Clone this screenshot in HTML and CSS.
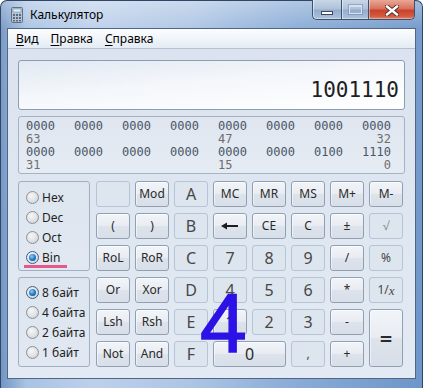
FILE: index.html
```html
<!DOCTYPE html>
<html>
<head>
<meta charset="utf-8">
<title>Калькулятор</title>
<link rel="stylesheet" href="styles.css">
</head>
<body>
<div class="window">
  <div class="titlebar">
    <svg class="appicon" width="12" height="16" viewBox="0 0 12 16">
      <rect x="0.5" y="0.5" width="11" height="15" rx="1" fill="#b7c4d4" stroke="#5f7088"/>
      <rect x="2" y="2" width="8" height="3" fill="#dff3ff" stroke="#6c8aa6" stroke-width="0.6"/>
      <g fill="#5a6b80">
        <rect x="2" y="7" width="2" height="2"/><rect x="5" y="7" width="2" height="2"/><rect x="8" y="7" width="2" height="2"/>
        <rect x="2" y="10" width="2" height="2"/><rect x="5" y="10" width="2" height="2"/><rect x="8" y="10" width="2" height="2"/>
        <rect x="2" y="13" width="2" height="1.5"/><rect x="5" y="13" width="2" height="1.5"/><rect x="8" y="13" width="2" height="1.5"/>
      </g>
    </svg>
    <span class="title">Калькулятор</span>
    <div class="controls">
      <div class="ctl cmin"><span class="minglyph"></span></div>
      <div class="ctl cmax"><span class="maxglyph"></span></div>
      <div class="ctl cclose">
        <svg width="14" height="11" viewBox="0 0 14 11">
          <path d="M2 1.5 L12 9.5 M12 1.5 L2 9.5" stroke="#4a2a24" stroke-width="4.2" stroke-linecap="square"/>
          <path d="M2 1.5 L12 9.5 M12 1.5 L2 9.5" stroke="#ffffff" stroke-width="2.4" stroke-linecap="square"/>
        </svg>
      </div>
    </div>
  </div>
  <div class="client">
    <div class="menubar">
      <span class="mi"><u>В</u>ид</span>
      <span class="mi"><u>П</u>равка</span>
      <span class="mi"><u>С</u>правка</span>
    </div>
    <div class="calc">
      <div class="display">1001110</div>
      <div class="bits">
        <span>0000</span><span>0000</span><span>0000</span><span>0000</span><span>0000</span><span>0000</span><span>0000</span><span>0000</span>
        <span class="lbl">63</span><span></span><span></span><span></span><span class="lbl">47</span><span></span><span></span><span class="lbl rt">32</span>
        <span>0000</span><span>0000</span><span>0000</span><span>0000</span><span>0000</span><span>0000</span><span>0100</span><span>1110</span>
        <span class="lbl">31</span><span></span><span></span><span></span><span class="lbl">15</span><span></span><span></span><span class="lbl rt">0</span>
      </div>
      <div class="keys">
        <div class="group g1">
          <div class="radio"><span class="dot"></span>Hex</div>
          <div class="radio"><span class="dot"></span>Dec</div>
          <div class="radio"><span class="dot"></span>Oct</div>
          <div class="radio"><span class="dot on"></span>Bin</div>
          <span class="pink"></span>
        </div>
        <div class="group g2">
          <div class="radio"><span class="dot on"></span>8 байт</div>
          <div class="radio"><span class="dot"></span>4 байта</div>
          <div class="radio"><span class="dot"></span>2 байта</div>
          <div class="radio"><span class="dot"></span>1 байт</div>
        </div>

        <div class="k f"></div>
        <div class="k r">Mod</div>
        <div class="k f big">A</div>
        <div class="k r">MC</div>
        <div class="k r">MR</div>
        <div class="k r">MS</div>
        <div class="k r">M+</div>
        <div class="k r">M-</div>

        <div class="k r">(</div>
        <div class="k r">)</div>
        <div class="k f big">B</div>
        <div class="k r"><svg width="18" height="8" viewBox="0 0 18 8"><path d="M4 4 H17" stroke="#1d1d1d" stroke-width="2"/><path d="M0 4 L6 0.5 L6 7.5 Z" fill="#1d1d1d"/></svg></div>
        <div class="k r">CE</div>
        <div class="k r">C</div>
        <div class="k r sm">±</div>
        <div class="k f dim sm">√</div>

        <div class="k r">RoL</div>
        <div class="k r">RoR</div>
        <div class="k f big">C</div>
        <div class="k f big">7</div>
        <div class="k f big">8</div>
        <div class="k f big">9</div>
        <div class="k r sm">/</div>
        <div class="k f">%</div>

        <div class="k r">Or</div>
        <div class="k r">Xor</div>
        <div class="k f big">D</div>
        <div class="k f big">4</div>
        <div class="k f big">5</div>
        <div class="k f big">6</div>
        <div class="k r sm">*</div>
        <div class="k f">1/<i class="ix">x</i></div>

        <div class="k r">Lsh</div>
        <div class="k r">Rsh</div>
        <div class="k f big">E</div>
        <div class="k r big">1</div>
        <div class="k f big">2</div>
        <div class="k f big">3</div>
        <div class="k r sm">-</div>
        <div class="k r eq">=</div>

        <div class="k r">Not</div>
        <div class="k r">And</div>
        <div class="k f big">F</div>
        <div class="k r big zero">0</div>
        <div class="k f comma">,</div>
        <div class="k r sm">+</div>
      </div>
    </div>
  </div>
  <div class="mark">4</div>
</div>
</body>
</html>
```

FILE: styles.css
```css
* { box-sizing: border-box; }
html, body { margin: 0; padding: 0; background: #ffffff; }
body {
  width: 423px;
  height: 388px;
  overflow: hidden;
  font-family: "Noto Sans", "Open Sans", sans-serif;
  color: #1e1e1e;
}
.window {
  position: relative;
  width: 423px;
  height: 388px;
  border: 1px solid #2f4764;
  border-bottom: none;
  border-radius: 7px 7px 0 0;
  padding: 0 6px 9px 6px;
  display: flex;
  flex-direction: column;
  background:
    linear-gradient(180deg, rgba(255,255,255,0.35) 0px, rgba(255,255,255,0.05) 28px, rgba(255,255,255,0) 100%),
    linear-gradient(90deg, #7396c4 0%, #a9c3e3 6%, #bdd0ea 22%, #adc5e4 45%, #89abd6 70%, #6f96c9 100%);
}
.titlebar {
  height: 27px;
  display: flex;
  align-items: flex-start;
  flex: none;
}
.appicon { margin: 6px 0 0 4px; flex: none; }
.title {
  margin: 6px 0 0 7px;
  font-size: 12px;
  line-height: 16px;
  color: #000;
}
.controls {
  margin-left: auto;
  margin-right: 1px;
  margin-top: -1px;
  display: flex;
  height: 20px;
}
.ctl {
  height: 20px;
  display: flex;
  align-items: center;
  justify-content: center;
  border: 1px solid #3c516c;
  border-top: none;
}
.cmin {
  width: 29px;
  border-radius: 0 0 0 5px;
  border-right: none;
  background: linear-gradient(180deg, #c9d6e7 0%, #afc2da 45%, #95adcd 55%, #adc2dc 100%);
  box-shadow: inset 1px 0 0 rgba(255,255,255,0.5), inset 0 -1px 0 rgba(255,255,255,0.4);
}
.cmax {
  width: 27px;
  border-right: none;
  background: linear-gradient(180deg, #c9d6e7 0%, #afc2da 45%, #95adcd 55%, #adc2dc 100%);
  box-shadow: inset 1px 0 0 rgba(255,255,255,0.5), inset 0 -1px 0 rgba(255,255,255,0.4);
}
.cclose {
  width: 47px;
  border-radius: 0 0 5px 0;
  background: linear-gradient(180deg, #e8a898 0%, #d8715c 45%, #c8432c 55%, #d4593f 85%, #e08a6e 100%);
  box-shadow: inset 1px 0 0 rgba(255,255,255,0.4), inset 0 -1px 0 rgba(255,255,255,0.3);
}
.cclose svg { margin-top: 1px; }
.minglyph {
  width: 12px;
  height: 4px;
  margin-top: 6px;
  background: #ffffff;
  border: 1px solid #3a4a5e;
}
.maxglyph {
  width: 13px;
  height: 9px;
  border: 1px solid #d8e2ee;
  border-top-width: 2px;
  box-shadow: 0 0 0 1px rgba(110,130,160,0.5);
  margin-top: -1px;
}
.client {
  flex: 1;
  display: flex;
  flex-direction: column;
  border: 1px solid #4f6785;
  background: #dce5f0;
}
.menubar {
  height: 20px;
  flex: none;
  display: flex;
  align-items: center;
  gap: 12px;
  padding: 0 0 1px 8px;
  font-size: 12px;
  color: #000;
  border-bottom: 1px solid #b6c0cd;
  background: linear-gradient(180deg, #fbfcfe 0%, #f1f5fa 50%, #e4ebf4 100%);
}
.mi u { text-underline-offset: 2px; }
.calc {
  flex: 1;
  padding: 11px 10px 0 10px;
  background: linear-gradient(180deg, #dae3ef 0%, #dfe7f1 60%, #e3eaf3 100%);
}
.display {
  height: 50px;
  border: 1px solid #8c9db3;
  border-radius: 3px;
  background: linear-gradient(175deg, #e2e9f2 0%, #f4f7fb 45%, #ffffff 100%);
  font-family: "DejaVu Sans Mono", "Liberation Mono", monospace;
  font-size: 21px;
  line-height: 24px;
  padding: 17px 5px 0 0;
  text-align: right;
  color: #1f1f1f;
}
.bits {
  margin-top: 6px;
  height: 58px;
  border: 1px solid #a4b2c4;
  border-radius: 3px;
  background: linear-gradient(180deg, #dfe6ef 0%, #e6ecf4 100%);
  padding: 3px 0 0 7px;
  display: grid;
  grid-template-columns: repeat(8, 29px);
  column-gap: 19px;
  grid-auto-rows: 13px;
  font-family: "DejaVu Sans Mono", "Liberation Mono", monospace;
  font-size: 12px;
  line-height: 13px;
  color: #4b5566;
}
.bits .lbl { color: #6e6e6e; }
.bits .rt { text-align: right; }
.keys {
  margin-top: 7px;
  display: grid;
  grid-template-columns: 73px repeat(8, 34px);
  grid-auto-rows: 26px;
  column-gap: 5px;
  row-gap: 6px;
}
.group {
  position: relative;
  grid-column: 1;
  width: 72px;
  border: 1px solid #9fb0c5;
  border-radius: 3px;
  background: linear-gradient(180deg, #dde5ef 0%, #e1e8f1 100%);
  padding: 5px 0 0 7px;
  display: flex;
  flex-direction: column;
}
.g1 { grid-row: 1 / 4; }
.g2 { grid-row: 4 / 7; padding-top: 4px; }
.radio {
  height: 20px;
  display: flex;
  align-items: center;
  font-size: 12px;
  color: #1e1e1e;
  white-space: nowrap;
}
.dot {
  position: relative;
  width: 13px;
  height: 13px;
  flex: none;
  margin-right: 3px;
  border-radius: 50%;
  border: 1px solid #8d9198;
  background: radial-gradient(circle at 40% 35%, #f7f7f7 0%, #dfe1e4 55%, #c4c8cd 100%);
}
.dot.on { border-color: #3f5f86; }
.dot.on::after {
  content: "";
  position: absolute;
  left: 2px;
  top: 2px;
  width: 7px;
  height: 7px;
  border-radius: 50%;
  background: radial-gradient(circle at 40% 35%, #8fd0ff 0%, #2a86d1 45%, #0b3e7c 100%);
}
.pink {
  position: absolute;
  left: 5px;
  top: 83px;
  width: 43px;
  height: 3px;
  background: #e6578a;
}
.k {
  display: flex;
  align-items: center;
  justify-content: center;
  border-radius: 3px;
  font-size: 12px;
  color: #2a2a2a;
  line-height: 1;
}
.k.r {
  border: 1px solid #919fb2;
  background: linear-gradient(180deg, #f1f4f8 0%, #e9edf3 48%, #dde3eb 52%, #d8dfe8 100%);
  box-shadow: inset 0 1px 0 #fbfcfd, inset 1px 0 0 rgba(255,255,255,0.5);
}
.k.f {
  border: 1px solid #b6c4d5;
  background: #dde5ef;
  color: #474747;
}
.k.big { font-size: 16px; }
.k.sm { font-size: 12px; }
.k.dim { color: #8a8a8a; }
.ix { font-family: "Liberation Serif", serif; font-size: 13px; }
.k.eq { grid-row: span 2; font-size: 22px; font-weight: 600; }
.k.zero { grid-column: span 2; }
.k.comma { align-items: flex-end; padding-bottom: 6px; }
.mark {
  position: absolute;
  left: 199px;
  top: 280px;
  font-family: "Liberation Sans", Arial, sans-serif;
  font-size: 84px;
  line-height: 84px;
  color: #2d12e6;
  -webkit-text-stroke: 1.5px #2d12e6;
}
```
